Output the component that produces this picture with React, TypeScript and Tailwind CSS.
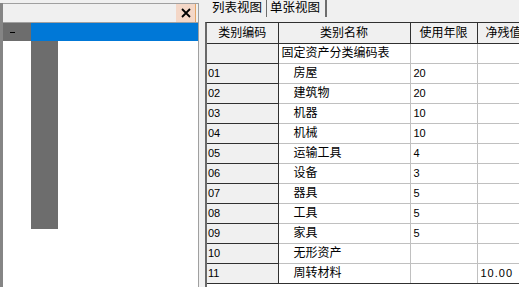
const rows = [
  { code: "01", name: "房屋", years: "20", rest: "" },
  { code: "02", name: "建筑物", years: "20", rest: "" },
  { code: "03", name: "机器", years: "10", rest: "" },
  { code: "04", name: "机械", years: "10", rest: "" },
  { code: "05", name: "运输工具", years: "4", rest: "" },
  { code: "06", name: "设备", years: "3", rest: "" },
  { code: "07", name: "器具", years: "5", rest: "" },
  { code: "08", name: "工具", years: "5", rest: "" },
  { code: "09", name: "家具", years: "5", rest: "" },
  { code: "10", name: "无形资产", years: "", rest: "" },
  { code: "11", name: "周转材料", years: "", rest: "10.00" },
];

const font = { fontFamily: '"Liberation Sans", "Noto Sans CJK SC", sans-serif' };

export default function App() {
  return (
    <div
      className="flex h-[287px] w-[519px] overflow-hidden bg-[#f0f0f0] text-[12px] leading-none text-black"
      style={font}
    >
      {/* left tree panel */}
      <div className="mt-[3px] flex h-[284px] w-[199px] flex-col border-l-[3px] border-r border-l-[#858585] border-r-[#a0a0a0] bg-white">
        <div className="flex h-[20px] items-stretch justify-end border-y border-[#a0a0a0] bg-[#f0f0f0]">
          <button className="mr-[2px] flex w-[20px] items-center justify-center border-r border-[#e3a466] bg-[#f4d7c7]">
            <svg width="10" height="10" viewBox="0 0 10 10">
              <path d="M1 1L9 9M9 1L1 9" stroke="black" strokeWidth="1.8" />
            </svg>
          </button>
        </div>
        <div className="flex h-[18px]">
          <div className="flex w-[28px] items-center bg-[#6d6d6d] pl-[7px]">
            <span className="block h-px w-[5px] bg-black" />
          </div>
          <div className="flex-1 bg-[#0078d7]" />
        </div>
        <div className="ml-[28px] h-[188px] w-[27px] bg-[#6d6d6d]" />
      </div>

      {/* right list panel */}
      <div className="flex min-w-0 flex-1 flex-col">
        <div className="flex h-[22px] pl-[10px] text-[12.5px]">
          <div className="flex h-[17px] w-[58px] items-center border-r border-[#6d6d6d] pl-[3px]">列表视图</div>
          <div className="flex h-[17px] w-[60px] items-center border-r-2 border-[#6d6d6d] pl-[3px]">单张视图</div>
        </div>
        <div className="ml-[6px] flex-1 overflow-hidden border-l-2 border-t border-l-[#696969] border-t-[#303030] bg-white">
          <table className="w-[340px] table-fixed border-collapse">
            <colgroup>
              <col className="w-[71px]" />
              <col className="w-[132px]" />
              <col className="w-[67px]" />
              <col className="w-[70px]" />
            </colgroup>
            <thead>
              <tr className="h-[20px] bg-[#f0f0f0]">
                <th className="border-r border-b border-[#303030] text-center font-normal">类别编码</th>
                <th className="border-r border-b border-[#303030] text-center font-normal">类别名称</th>
                <th className="border-r border-b border-[#303030] text-center font-normal">使用年限</th>
                <th className="border-b border-[#303030] pl-[8px] text-left font-normal whitespace-nowrap">净残值</th>
              </tr>
            </thead>
            <tbody>
              <tr className="h-[20px]">
                <td className="border-r border-b border-r-[#303030] border-b-[#303030] bg-[#f0f0f0]" />
                <td className="border-r border-b border-[#c0c0c0] pl-[3px]">固定资产分类编码表</td>
                <td className="border-r border-b border-[#c0c0c0]" />
                <td className="border-b border-[#c0c0c0]" />
              </tr>
              {rows.map((r, i) => {
                const last = i === rows.length - 1;
                const line = last ? "border-b-[#303030]" : "border-b-[#c0c0c0]";
                return (
                  <tr key={r.code} className="h-[20px]">
                    <td className="border-r border-b border-r-[#303030] border-b-[#303030] bg-[#f0f0f0] pl-[1px] text-[11px]">
                      {r.code}
                    </td>
                    <td className={`border-r border-b border-r-[#c0c0c0] pl-[15px] ${line}`}>{r.name}</td>
                    <td className={`border-r border-b border-r-[#c0c0c0] pl-[3px] text-[11px] ${line}`}>{r.years}</td>
                    <td className={`border-b pl-[3px] text-[11px] tracking-[1px] ${line}`}>{r.rest}</td>
                  </tr>
                );
              })}
            </tbody>
          </table>
        </div>
      </div>
    </div>
  );
}
